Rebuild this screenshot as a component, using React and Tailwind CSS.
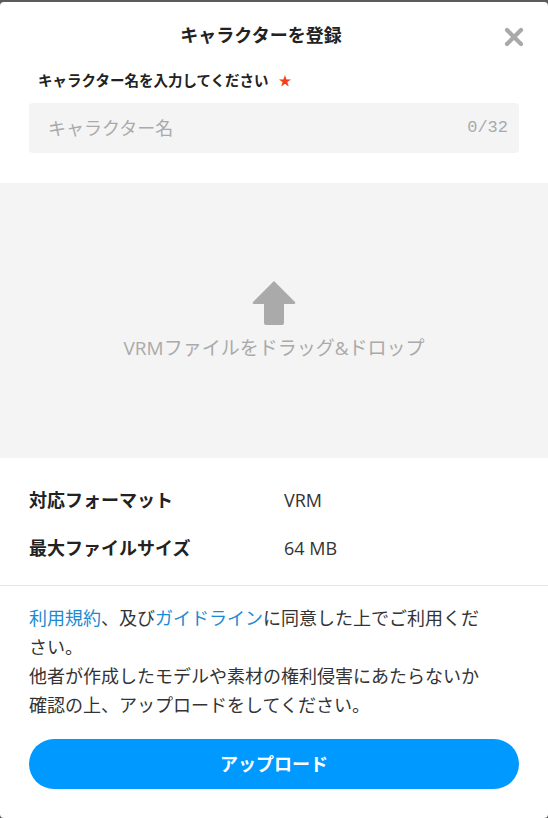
const jp = { fontFamily: '"Open Sans", "Noto Sans CJK JP", sans-serif' };

function CloseIcon() {
  return (
    <svg width="20" height="20" viewBox="0 0 20 20">
      <path d="M3 3 L17 17 M17 3 L3 17" stroke="#a9a9a9" strokeWidth="4.2" strokeLinecap="round" />
    </svg>
  );
}

function UploadArrow() {
  return (
    <svg width="46" height="46" viewBox="0 0 46 46">
      <path
        d="M23 1 L44 22 Q45 24 43 24 L33 24 L33 43 Q33 45 31 45 L15 45 Q13 45 13 43 L13 24 L3 24 Q1 24 2 22 Z"
        fill="#aaaaaa"
      />
    </svg>
  );
}

function InfoRow({ label, value }) {
  return (
    <div className="flex items-center h-6 px-[29px]">
      <span className="w-[255px] text-[18px] font-bold text-[#222]">{label}</span>
      <span className="text-[18px] text-[#333]">{value}</span>
    </div>
  );
}

export default function App() {
  return (
    <div className="bg-[#5b5b5b] pt-[2px] w-[548px] h-[818px]" style={jp}>
      <div className="bg-white rounded-[4px] h-[816px] flex flex-col">
        <div className="relative flex justify-center pt-[21px] pr-[26px]">
          <h2 className="text-[18px] leading-6 font-bold text-[#222]">キャラクターを登録</h2>
          <button className="absolute right-[24px] top-[25px]">
            <CloseIcon />
          </button>
        </div>

        <div className="px-[29px] mt-[24px]">
          <div className="flex items-center h-5 pl-[9px] gap-[10px]">
            <span className="text-[14.5px] font-bold text-[#222]">キャラクター名を入力してください</span>
            <span className="text-[13px] text-[#f53d1c]">★</span>
          </div>
          <div className="mt-[12px] h-[50px] rounded-[4px] bg-[#f4f4f4] flex items-center justify-between pl-[19px] pr-[11px]">
            <span className="text-[18px] text-[#aaa]">キャラクター名</span>
            <span className="text-[17px] text-[#aaa]" style={{ fontFamily: '"Liberation Mono", monospace' }}>
              0/32
            </span>
          </div>
        </div>

        <div className="mt-[30px] h-[275px] bg-[#f4f4f4] flex flex-col items-center pt-[97px]">
          <UploadArrow />
          <p className="mt-[10px] text-[19px] leading-6 text-[#aaa]">VRMファイルをドラッグ&ドロップ</p>
        </div>

        <div className="mt-[30px] flex flex-col gap-6">
          <InfoRow label="対応フォーマット" value="VRM" />
          <InfoRow label="最大ファイルサイズ" value="64 MB" />
        </div>

        <div className="mt-[25px] border-t border-[#e6e6e6]" />

        <div className="px-[29px] pt-[18px]">
          <p className="w-[462px] text-[18px] leading-[29px] text-[#333]">
            <a className="text-[#1b8ad3]">利用規約</a>、及び<a className="text-[#1b8ad3]">ガイドライン</a>
            に同意した上でご利用ください。
            <br />
            他者が作成したモデルや素材の権利侵害にあたらないか確認の上、アップロードをしてください。
          </p>
          <button className="mt-[19px] w-full h-[50px] rounded-full bg-[#0099ff] text-white text-[18px] font-bold">
            アップロード
          </button>
        </div>
      </div>
    </div>
  );
}
